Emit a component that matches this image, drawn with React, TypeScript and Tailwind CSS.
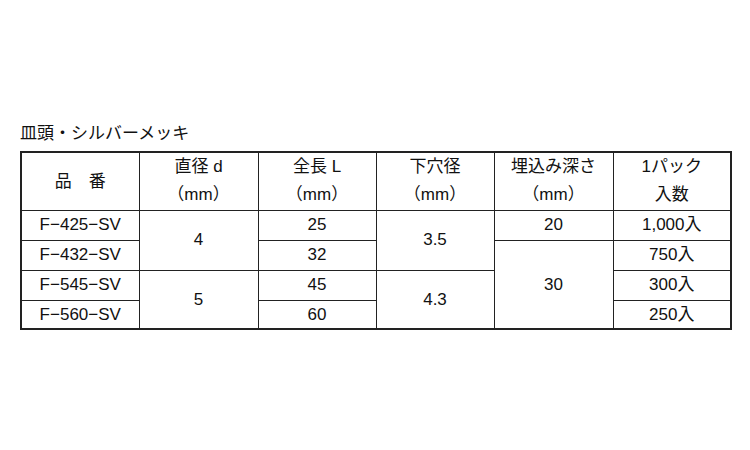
const font = { fontFamily: '"Liberation Sans", "Noto Sans CJK JP", sans-serif' };

const headers: [string, string][] = [
  ["直径 d", "（mm）"],
  ["全長 L", "（mm）"],
  ["下穴径", "（mm）"],
  ["埋込み深さ", "（mm）"],
  ["1パック", "入数"],
];

const cell = "border border-[#222] text-center align-middle p-0";

export default function App() {
  return (
    <div className="h-[450px] w-[750px] bg-white text-[#111]" style={font}>
      <div className="px-[20px] pt-[124px]">
        <div className="h-[20px] text-[17px] leading-[20px] tracking-[0px]">皿頭・シルバーメッキ</div>
        <table className="mt-[7px] w-[710px] table-fixed border-collapse border-2 border-[#222] text-[17px]">
          <colgroup>
            <col className="w-[118px]" />
            <col className="w-[119px]" />
            <col className="w-[118px]" />
            <col className="w-[118px]" />
            <col className="w-[119px]" />
            <col className="w-[118px]" />
          </colgroup>
          <tbody>
            <tr className="h-[58px]">
              <td className={cell}>品　番</td>
              {headers.map(([a, b]) => (
                <td key={a} className={cell}>
                  <div className="leading-[28px]">{a}</div>
                  <div className="leading-[28px]">{b}</div>
                </td>
              ))}
            </tr>
            <tr className="h-[30px]">
              <td className={cell}>F−425−SV</td>
              <td className={cell} rowSpan={2}>4</td>
              <td className={cell}>25</td>
              <td className={cell} rowSpan={2}>3.5</td>
              <td className={cell}>20</td>
              <td className={cell}>1,000入</td>
            </tr>
            <tr className="h-[30px]">
              <td className={cell}>F−432−SV</td>
              <td className={cell}>32</td>
              <td className={cell} rowSpan={3}>30</td>
              <td className={cell}>750入</td>
            </tr>
            <tr className="h-[30px]">
              <td className={cell}>F−545−SV</td>
              <td className={cell} rowSpan={2}>5</td>
              <td className={cell}>45</td>
              <td className={cell} rowSpan={2}>4.3</td>
              <td className={cell}>300入</td>
            </tr>
            <tr className="h-[29px]">
              <td className={cell}>F−560−SV</td>
              <td className={cell}>60</td>
              <td className={cell}>250入</td>
            </tr>
          </tbody>
        </table>
      </div>
    </div>
  );
}
